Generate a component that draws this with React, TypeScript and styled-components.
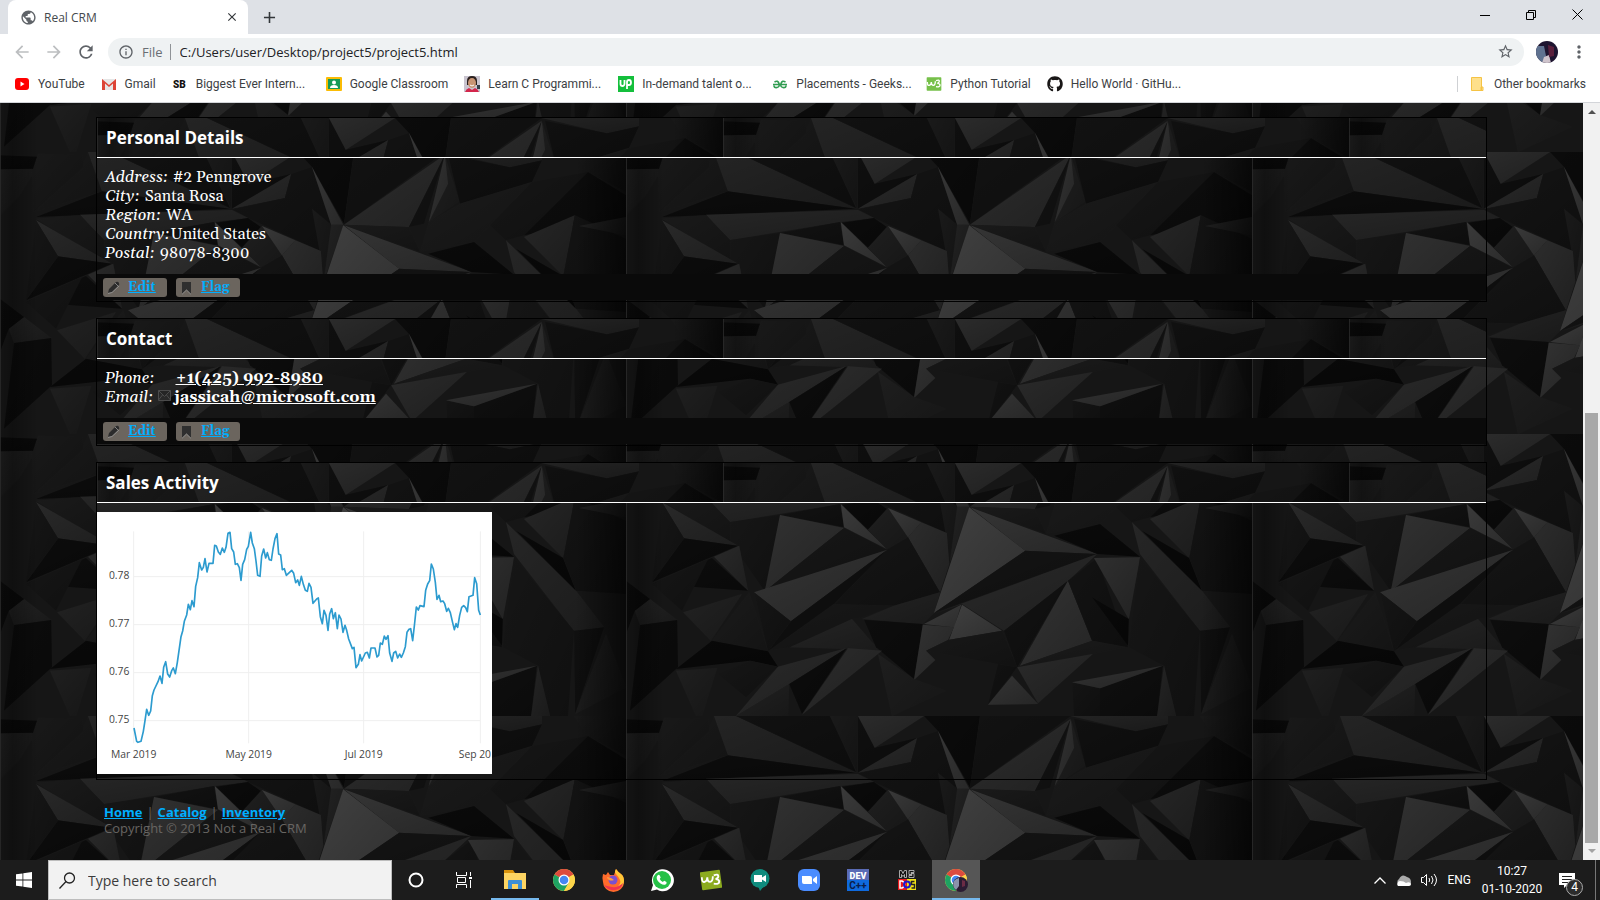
import React from "react";
import styled, { createGlobalStyle } from "styled-components";
import { FaGithub } from "react-icons/fa";
import {
  MdPublic,
  MdClose,
  MdAdd,
  MdArrowBack,
  MdArrowForward,
  MdRefresh,
  MdInfoOutline,
  MdStarBorder,
  MdMoreVert,
} from "react-icons/md";

/* ---------- low-poly rock texture, repeated every 626 x 282 px ---------- */

const facets: [string, string][] = [
  ["0,52 90,50 50,130 0,190", "1d1d1d"],
  ["0,10 95,14 90,50 0,52", "0a0a0a"],
  ["95,5 205,10 210,45 85,180 80,60", "191919"],
  ["220,0 255,118 85,180 205,50", "1a1a1a"],
  ["220,0 275,0 575,170 255,118", "242424"],
  ["255,118 575,170 90,195", "0c0c0c"],
  ["275,0 510,0 575,168", "111111"],
  ["510,0 578,0 578,170", "1a1a1a"],
  ["580,0 622,95 730,65 580,170", "0f0f0f"],
  ["580,0 745,0 622,95", "2b2b2b"],
  ["580,170 728,66 712,138", "2a2a2a"],
  ["712,138 728,66 780,45 828,218 800,297 620,198 580,172", "141414"],
  ["745,0 885,0 860,215 780,45", "0b0b0b"],
  ["885,0 1112,0 860,218", "121212"],
  ["780,45 858,218 828,218", "373737"],
  ["780,170 828,218 808,390 798,290", "1a1a1a"],
  ["828,218 858,218 810,385", "222222"],
  ["860,218 1112,8 1070,130 1022,225", "2d2d2d"],
  ["1112,8 1060,215 1022,225", "131313"],
  ["1112,10 1148,148 1072,210", "1f1f1f"],
  ["1112,10 1120,95 1072,210", "333333"],
  ["1112,0 1355,0 1355,25 1275,46", "232323"],
  ["1120,8 1275,46 1355,25 1330,90 1150,155", "101010"],
  ["1150,155 1330,90 1225,220 1185,270 1050,300 1072,210", "1b1b1b"],
  ["1435,0 1565,0 1565,120 1470,60", "181818"],
  ["1470,60 1565,130 1565,200 1310,250 1330,170", "0d0d0d"],
  ["1330,90 1470,60 1310,250 1265,265 1225,220", "161616"],
  ["200,188 580,174 620,198 535,210 260,264", "262626"],
  ["620,198 652,225 605,287 540,212", "0b0b0b"],
  ["90,200 200,190 260,264 262,325", "1a1a1a"],
  ["260,264 385,243 347,472 262,325", "161616"],
  ["90,205 280,335 145,313", "292929"],
  ["145,313 280,335 65,445", "0c0c0c"],
  ["90,205 145,313 65,445", "161616"],
  ["385,243 535,210 545,280", "121212"],
  ["385,243 545,282 347,472", "313131"],
  ["545,282 652,347 347,472", "171717"],
  ["537,210 652,345 545,280", "3a3a3a"],
  ["655,222 705,310 652,345 605,287", "1f1f1f"],
  ["655,222 738,265 705,310", "393939"],
  ["738,265 802,297 808,390 785,475 705,310", "2c2c2c"],
  ["652,347 705,310 785,475 670,515 520,512", "151515"],
  ["220,368 283,335 305,470", "292929"],
  ["215,372 305,470 65,450", "0d0d0d"],
  ["65,450 205,375 140,530", "161616"],
  ["320,475 652,348 412,562", "343434"],
  ["652,348 520,510 355,652 412,562", "101010"],
  ["143,535 290,480 212,620", "222222"],
  ["308,475 355,652 215,620", "1b1b1b"],
  ["320,475 412,562 355,652", "151515"],
  ["22,530 60,495 128,558 35,573", "222222"],
  ["0,440 60,495 22,530 0,600", "0b0b0b"],
  ["35,573 128,558 130,700 10,830", "0c0c0c"],
  ["125,705 215,620 355,652 380,698 310,680", "090909"],
  ["520,510 670,515 590,550 565,555 410,640 360,648", "181818"],
  ["565,555 615,625 640,650 555,645 410,640", "242424"],
  ["590,555 670,515 785,475 770,537 742,570", "232323"],
  ["595,557 742,570 720,735 625,640", "0d0d0d"],
  ["860,218 1022,225 1050,300", "1a1a1a"],
  ["858,220 998,350 770,537", "414141"],
  ["860,220 1178,360 998,350", "353535"],
  ["998,350 1178,360 770,537", "141414"],
  ["1178,360 1105,440 945,590 840,510 775,537", "2a2a2a"],
  ["745,570 838,512 820,580", "3c3c3c"],
  ["840,512 940,590 808,617", "404040"],
  ["742,572 820,580 805,618 750,650 773,678 720,738", "323232"],
  ["805,618 940,590 978,700 930,690 750,650", "181818"],
  ["1105,440 945,590 978,700", "121212"],
  ["1105,440 1165,620 985,695", "333333"],
  ["1105,440 1178,372 1255,640 1165,620", "131313"],
  ["985,695 1165,620 1250,640 1165,660", "1b1b1b"],
  ["1178,360 1285,368 1185,270 1070,305", "0a0a0a"],
  ["1170,372 1285,370 1257,555", "2f2f2f"],
  ["1165,490 1257,555 1255,635", "090909"],
  ["1265,265 1440,470 1510,580 1435,590 1285,360", "262626"],
  ["1285,370 1435,590 1420,846 1375,846 1345,695 1257,640", "161616"],
  ["1310,255 1437,190 1408,372", "262626"],
  ["1290,290 1408,372 1440,470", "090909"],
  ["1437,190 1565,260 1565,480 1440,470 1408,372", "131313"],
  ["1448,222 1565,195 1565,250", "222222"],
  ["1435,590 1510,580 1438,840", "101010"],
  ["1515,600 1565,760 1438,840", "1f1f1f"],
  ["1115,745 1185,763 1185,846 1120,846", "141414"],
  ["1185,763 1342,695 1328,846 1185,846", "0f0f0f"],
  ["1115,745 1342,695 1185,763", "323232"],
  ["1345,695 1375,846 1328,846", "242424"],
  ["978,700 1167,660 1030,808", "2a2a2a"],
  ["930,690 978,700 905,812", "121212"],
  ["965,725 1030,810 905,812", "343434"],
  ["125,710 228,702 190,846 175,846", "1f1f1f"],
  ["230,720 310,680 380,698 300,790", "161616"],
  ["380,698 552,642 408,750 275,846", "2a2a2a"],
  ["408,750 405,846 275,846", "212121"],
  ["552,642 408,750 440,840", "0c0c0c"],
  ["555,643 640,650 440,842", "2c2c2c"],
  ["630,660 720,735 800,770 665,846", "1e1e1e"],
];

const rockSvg =
  `<svg xmlns="http://www.w3.org/2000/svg" width="626" height="282" viewBox="0 0 1565 846" preserveAspectRatio="none">` +
  `<defs><linearGradient id="s" x1="0" y1="0" x2="1" y2="1"><stop offset="0" stop-opacity="0"/><stop offset="1" stop-opacity=".28"/></linearGradient>` +
  `<linearGradient id="v"><stop offset="0" stop-opacity=".1"/><stop offset=".02" stop-opacity=".3"/><stop offset=".06" stop-opacity="0"/><stop offset=".92" stop-opacity="0"/><stop offset="1" stop-opacity=".6"/></linearGradient></defs>` +
  `<rect width="1565" height="846" fill="#161616"/>` +
  facets
    .map(([p, c]) => `<polygon points="${p}" fill="#${c}"/><polygon points="${p}" fill="url(#s)"/>`)
    .join("") +
  `<rect width="1565" height="846" fill="url(#v)"/><rect width="2" height="846" fill="#2a2a2a"/></svg>`;

const rock = `url("data:image/svg+xml,${encodeURIComponent(rockSvg)}")`;

const uiFont = `"Open Sans", "Noto Sans", sans-serif`;
const compactFont = `Roboto, "Open Sans", sans-serif`;
const serif = `Georgia, Gelasio, "Liberation Serif", serif`;

const Global = createGlobalStyle`
  *, *::before, *::after { box-sizing: border-box; }
  body { margin: 0; font-family: ${uiFont}; background: #111; }
  button, input { font-family: inherit; padding: 0; border: 0; background: none; }
  svg { display: block; flex: none; }
`;

const Screen = styled.div`
  min-height: 100vh;
  display: flex;
  flex-direction: column;
`;

/* ---------- browser frame ---------- */

const TabStrip = styled.div`
  height: 34px;
  background: #dee1e6;
  display: flex;
  padding-left: 8px;
`;
const Tab = styled.div`
  width: 240px;
  background: #fff;
  border-radius: 8px 8px 0 0;
  display: flex;
  align-items: center;
  gap: 7px;
  padding: 0 9px 0 12px;
  font-size: 12px;
  color: #45494d;
`;
const TabTitle = styled.span`
  flex: 1;
`;
const IconButton = styled.button<{ $w?: number; $color?: string }>`
  width: ${(p) => p.$w ?? 16}px;
  display: flex;
  align-items: center;
  justify-content: center;
  color: ${(p) => p.$color ?? "#5f6368"};
`;
const WindowControls = styled.div`
  margin-left: auto;
  height: 29px;
  display: flex;
`;
const Toolbar = styled.div`
  height: 35px;
  background: #fff;
  display: flex;
  align-items: center;
  padding: 0 10px 0 6px;
`;
const Omnibox = styled.label`
  flex: 1;
  height: 28px;
  border-radius: 14px;
  background: #eff2f3;
  display: flex;
  align-items: center;
  margin: 0 12px 0 6px;
  padding: 0 10px;
  font-size: 13px;
  color: #6a6e73;
`;
const Scheme = styled.span`
  padding: 0 7px 0 8px;
  border-right: 1px solid #8f9397;
  line-height: 16px;
`;
const Address = styled.input`
  flex: 1;
  padding-left: 9px;
  font-size: 13px;
  color: #202124;
  outline: 0;
`;
const Avatar = styled.svg`
  border-radius: 50%;
  margin-right: 10px;
`;
const BookmarkBar = styled.nav`
  height: 34px;
  background: #fff;
  border-bottom: 1px solid #d3d5d9;
  display: flex;
  align-items: center;
  gap: 16px;
  padding: 0 14px 3px;
`;
const Bookmark = styled.a<{ $clip?: boolean }>`
  display: flex;
  align-items: center;
  gap: 8px;
  font: 12px/16px ${compactFont};
  color: #3c4043;
  text-decoration: none;
  white-space: nowrap;
  width: ${(p) => (p.$clip ? "138px" : "auto")};
`;
const OtherBookmarks = styled(Bookmark)`
  margin-left: auto;
  border-left: 1px solid #cfd1d4;
  padding-left: 12px;
`;

/* ---------- web page ---------- */

const Viewport = styled.div`
  flex: 1;
  display: flex;
`;
const Page = styled.main`
  flex: 1;
  padding: 14px 96px 24px;
  background: #111 ${rock} 0 49px;
  font-family: ${serif};
  font-size: 16px;
  line-height: 19px;
  color: #fff;
`;
const Scrollbar = styled.div`
  width: 17px;
  background: #f1f1f1;
  display: flex;
  flex-direction: column;
  align-items: center;
  padding: 6px 0;
`;
const ScrollTrack = styled.div`
  flex: 1;
  width: 13px;
  display: flex;
  flex-direction: column;
  padding-bottom: 6px;
`;
const ScrollThumb = styled.div`
  height: 430px;
  margin-top: auto;
  background: #a8a8a8;
`;
const Panel = styled.section`
  border: 1px solid #000;
  margin-bottom: 16px;
`;
const PanelTitle = styled.h2`
  margin: 0;
  height: 40px;
  border-bottom: 1px solid #fff;
  background: #111 ${rock};
  padding: 0 9px;
  font: 700 17px/40px ${uiFont};
`;
const Details = styled.dl`
  margin: 0;
  padding: 10px 8px 11px;
`;
const DetailRow = styled.div<{ $tight?: boolean }>`
  display: flex;
  gap: ${(p) => (p.$tight ? 0 : 4)}px;
`;
const Term = styled.dt`
  font-style: italic;
`;
const Value = styled.dd<{ $indent?: number }>`
  margin: 0 0 0 ${(p) => p.$indent ?? 0}px;
  display: flex;
  align-items: center;
  gap: 3px;
`;
const StrongLink = styled.a`
  color: #fff;
  font-weight: bold;
`;
const Actions = styled.div`
  margin-bottom: 1px;
  height: 26px;
  background: #0a0a0a;
  display: flex;
  gap: 9px;
  padding: 4px 6px 3px;
`;
const Action = styled.a`
  width: 64px;
  border-radius: 3px;
  background: #6b655e;
  display: flex;
  align-items: center;
  gap: 8px;
  padding: 0 0 1px 4px;
  font-size: 13px;
  line-height: 16px;
  font-weight: bold;
  color: #00aeff;
`;
const ChartBox = styled.div`
  padding: 9px 0 5px;
`;
const PageFooter = styled.footer`
  padding: 8px 8px 0;
  font: 13px/16px ${uiFont};
  color: #686562;

  a {
    color: #00aeff;
    font-weight: bold;
  }
`;
const Divider = styled.span`
  margin: 0 4px;
`;
const Copyright = styled.p`
  margin: 0;
`;

/* ---------- desktop task bar ---------- */

const TaskBar = styled.footer`
  height: 40px;
  background: #1c1c1c;
  display: flex;
  color: #fff;
`;
const TaskButton = styled.button<{ $active?: boolean; $open?: boolean }>`
  width: 48px;
  display: flex;
  align-items: center;
  justify-content: center;
  background: ${(p) => (p.$active ? "#565656" : "transparent")};
  border-bottom: ${(p) => (p.$active || p.$open ? "2px solid #76b9ed" : "0")};
  padding-top: ${(p) => (p.$active || p.$open ? "2px" : "0")};
`;
const SearchBox = styled.label`
  width: 344px;
  background: #f2f2f2;
  border: 1px solid #bdbdbd;
  display: flex;
  align-items: center;
  gap: 12px;
  padding: 0 10px;
`;
const SearchInput = styled.input`
  flex: 1;
  font-size: 14px;
  outline: 0;
  &::placeholder { color: #3b3b3b; opacity: 1; }
`;
const AppList = styled.div`
  display: flex;
  gap: 1px;
  margin-left: 3px;
`;
const Tray = styled.div`
  margin-left: auto;
  display: flex;
  align-items: center;
  gap: 9px;
  padding-right: 4px;
  font: 12px/18px ${compactFont};
`;
const Clock = styled.time`
  width: 64px;
  text-align: center;
`;
const NoticeButton = styled.button`
  position: relative;
  width: 37px;
  height: 40px;
  margin-left: 6px;
  border-right: 1px solid #777;
  display: flex;
  align-items: center;
`;
const NoticeCount = styled.span`
  position: absolute;
  left: 7px;
  top: 19px;
  width: 17px;
  height: 17px;
  border-radius: 50%;
  border: 1px solid #aaa;
  background: #2c2c2c;
  color: #fff;
  font-size: 12px;
  line-height: 15px;
`;

/* ---------- small drawings ---------- */

const ChromeLogo = ({ face }: { face?: boolean }) => (
  <svg width="24" height="24" viewBox="0 0 24 24">
    <circle cx="12" cy="12" r="11" fill="#fdd54a" />
    <path d="M12 12 2.500 6.500A11 11 0 0 1 21.500 6.500Z" fill="#dd4b3e" />
    <path d="M12 12 2.500 6.500A11 11 0 0 0 12 23L17 15Z" fill="#1ea362" />
    <path d="M12 12 21.500 6.500A11 11 0 0 1 12 23L16.500 15Z" fill="#fdd54a" />
    <circle cx="12" cy="12" r="5.500" fill="#fff" />
    <circle cx="12" cy="12" r="4.300" fill="#4587f3" />
    {face && (
      <>
        <circle cx="16.500" cy="16.500" r="7.500" fill="#2b1c33" />
        <path d="M10 13a7 7 0 0 1 5-3v8l-3 4a7 7 0 0 1-2-9z" fill="#8b93ab" />
        <path d="M18 12l3 1v5l-3 1z" fill="#6b2c45" />
      </>
    )}
  </svg>
);

const W3Logo = ({ size, color }: { size: number; color: string }) => (
  <svg width={size} height={size} viewBox="0 0 24 24">
    <rect x="1" y="2" width="22" height="20" rx="1" fill={color} transform={size > 16 ? "rotate(-8 12 12)" : undefined} />
    <path d="M2 9q0 6 3 5 3-1 3-5 0 5 3 5t3-6M15 7q5-2 5 1 0 2-3 3 4 0 4 3t-6 2" fill="none" stroke="#fff" strokeWidth="2" />
  </svg>
);

const PencilIcon = () => (
  <svg width="13" height="13" viewBox="0 0 13 13">
    <path d="M1 12l1-4 7-7q2-1 3 1t-1 3L5 11z" fill="#2c2c2c" />
    <path d="M1 12.500 5 11.500 12 5M8 2l3 3" fill="none" stroke="#999" strokeWidth=".8" />
  </svg>
);

const FlagIcon = () => (
  <svg width="13" height="15" viewBox="0 0 13 15">
    <path d="M2 2h9v12l-4.500-4.500L2 14z" fill="#2f2f2f" />
    <path d="M2 14.300 6.500 10l4.500 4.300" fill="none" stroke="#999" strokeWidth=".8" />
  </svg>
);

const MailIcon = () => (
  <svg width="13" height="15" viewBox="0 0 13 15">
    <path d="M.5.500h12v10H.5zM.5.500l6 6 6-6M.5 10l4-5M12.500 10l-4-5" fill="#292929" stroke="#4b4b4b" />
  </svg>
);

const pricePoints =
  "132,684 140,724 144,727 153,724 160,694 165,662 170,628 176,646 182,633 187,587 192,570 204,545 210,528 216,550 221,502 227,485 233,522 239,531 245,512 250,504 256,521 262,487 267,452 273,410 278,393 283,364 290,345 295,313 301,329 306,302 312,320 317,259 323,233 328,188 335,210 340,202 345,176 351,216 357,190 369,190 374,136 379,138 385,156 391,163 397,144 403,157 408,142 414,100 420,97 425,146 431,156 436,193 442,191 448,203 453,241 458,193 464,179 470,148 475,139 482,97 487,129 493,146 498,183 503,226 510,229 515,168 521,147 527,174 532,158 538,179 544,181 549,147 555,116 561,101 566,162 572,165 577,209 583,206 589,226 605,211 611,220 617,248 623,240 628,256 634,229 640,253 646,271 652,274 657,250 663,262 669,310 680,297 685,294 691,350 697,371 702,331 708,346 714,391 719,342 725,326 730,356 736,338 742,386 747,345 753,357 759,397 765,376 770,391 776,417 787,446 792,442 798,503 805,493 810,464 815,483 826,459 832,457 838,474 843,444 855,444 861,471 866,466 871,429 877,433 883,408 888,418 894,407 899,459 906,484 911,459 917,454 923,474 929,462 934,472 940,459 946,440 951,397 957,388 962,386 968,422 973,378 979,321 985,330 990,317 1002,320 1007,271 1013,252 1019,242 1024,192 1030,207 1036,247 1041,298 1047,286 1052,305 1059,303 1064,311 1070,334 1075,325 1081,338 1087,364 1093,389 1098,371 1103,382 1109,346 1115,322 1121,317 1127,323 1132,335 1137,290 1149,286 1154,233 1160,251 1166,331 1171,345";

const axis = { fontFamily: "Open Sans", fontSize: 31, fill: "#444" };

const SalesChart = () => (
  <svg width="395" height="262" viewBox="21 36 1185 786" role="img" aria-label="Sales activity">
    <rect x="21" y="36" width="1185" height="786" fill="#fff" />
    <path d="M132 230H1171M132 374H1171M132 518H1171M132 662H1171M131 94V730M476 94V730M821 94V730M1171 94V730" stroke="#efefef" strokeWidth="3" />
    <polyline points={pricePoints} fill="none" stroke="#2c9bcf" strokeWidth="5" strokeLinejoin="round" />
    {["0.78", "0.77", "0.76", "0.75"].map((label, i) => (
      <text key={label} x="118" y={237 + i * 144} textAnchor="end" {...axis}>
        {label}
      </text>
    ))}
    {["Mar 2019", "May 2019", "Jul 2019"].map((label, i) => (
      <text key={label} x={131 + i * 345} y="774" textAnchor="middle" {...axis}>
        {label}
      </text>
    ))}
    <text x="1203" y="774" textAnchor="end" {...axis}>
      Sep 20
    </text>
  </svg>
);

/* ---------- data ---------- */

const S = (props: React.SVGProps<SVGSVGElement>) => <svg width="16" height="16" viewBox="0 0 16 16" {...props} />;

const bookmarks: { label: string; clip?: boolean; icon: React.ReactNode }[] = [
  {
    label: "YouTube",
    icon: <S><rect x="1" y="2" width="14" height="12" rx="3" fill="#f00" /><path d="M6.500 5.500v5L10.500 8z" fill="#fff" /></S>,
  },
  {
    label: "Gmail",
    icon: <S><path d="M1 3h14v11H1z" fill="#e6e6e6" /><path d="M1 14V3l7 6 7-6v11h-3V7.500L8 11 4 7.500V14z" fill="#dd4436" /></S>,
  },
  {
    label: "Biggest Ever Intern...",
    clip: true,
    icon: <S><text x="1" y="12" fontFamily="Roboto" fontWeight="900" fontSize="10" fill="#111">SB</text></S>,
  },
  {
    label: "Google Classroom",
    icon: <S><rect y="1" width="16" height="14" rx="1" fill="#fbbc05" /><rect x="2" y="3" width="12" height="10" fill="#159a56" /><circle cx="8" cy="6.500" r="2" fill="#fff" /><path d="M4 12q0-3 4-3t4 3z" fill="#fff" /></S>,
  },
  {
    label: "Learn C Programmi...",
    clip: true,
    icon: <S><path d="M0 0h16v16H0z" fill="#c9c4cf" /><path d="M3 5q0-5 5-5t5 5v4H3z" fill="#2b211f" /><path d="M13 9h3v4h-3z" fill="#36404a" /><ellipse cx="8" cy="7" rx="4" ry="5" fill="#c99574" /><path d="M6 9q2 2 4 0" stroke="#fff" fill="none" /><path d="M1 16q1-3 4-4l3 2 3-2q3 1 4 4z" fill="#d3264b" /></S>,
  },
  {
    label: "In-demand talent o...",
    clip: true,
    icon: <S><path d="M0 0h16v16H0z" fill="#14bf3c" /><path d="M2.500 4v4a2 2 0 0 0 4 0V4M9 13V6q0-2 2-2t2 2.500-2 2.500-2-1" fill="none" stroke="#fff" strokeWidth="1.800" /></S>,
  },
  {
    label: "Placements - Geeks...",
    clip: true,
    icon: <S><path d="M1 8.500h14M2.500 6Q6 4 7 7.500t-2 4-3-2M13.500 6Q10 4 9 7.500t2 4 3-2" fill="none" stroke="#2f9c50" strokeWidth="1.600" /></S>,
  },
  { label: "Python Tutorial", icon: <W3Logo size={16} color="#76c04a" /> },
  { label: "Hello World · GitHu...", clip: true, icon: <FaGithub size={16} color="#191717" /> },
];

const address: [string, string][] = [
  ["Address:", "#2 Penngrove"],
  ["City:", "Santa Rosa"],
  ["Region:", "WA"],
  ["Country:", "United States"],
  ["Postal:", "98078-8300"],
];

const apps: { name: string; open?: boolean; active?: boolean; icon: React.ReactNode }[] = [
  {
    name: "File Explorer",
    open: true,
    icon: (
      <svg width="24" height="22" viewBox="0 0 24 22">
        <path d="M1 1h9l2 3v5H1z" fill="#d9930c" />
        <path d="M1 4h22v16H1z" fill="#fcd462" />
        <path d="M5 20v-8q0-1 1-1h12q1 0 1 1v8h-4v-5H9v5z" fill="#3c8fd6" />
      </svg>
    ),
  },
  { name: "Chrome", icon: <ChromeLogo /> },
  {
    name: "Firefox",
    icon: (
      <svg width="24" height="24" viewBox="0 0 24 24">
        <path d="M2 6l3 1 2-3 2 3h4l2-6q2 3 5 5t3 8a10.500 10 0 0 1-21 0q-1-5 0-8z" fill="#ff6b2b" />
        <path d="M15 1q-2 3 0 5t4 6-5 9q9-1 9-8 0-5-3-7t-5-5z" fill="#ffc737" />
        <path d="M3 17q4 6 11 5 7-1 8-7-5 5-11 4T3 17z" fill="#f0334f" />
        <circle cx="12" cy="12" r="4.500" fill="#7a4fd0" />
        <path d="M7 9q4 1 6 3-3 1-5 0t-2-3z" fill="#ff9a3c" />
      </svg>
    ),
  },
  {
    name: "WhatsApp",
    icon: (
      <svg width="24" height="24" viewBox="0 0 24 24">
        <path d="M1 23l2-6A11 11 0 1 1 7 21.500z" fill="#fff" />
        <circle cx="12" cy="12" r="9" fill="#25c147" />
        <path d="M7.500 7.500q1.500-1.500 2.500.5l.7 1.600-1 1.300q1 2 3.200 3.200l1.300-1.300 2.300 1.200q.5 1.500-1 2.500-2 1-5-1-4-3-3.800-6 0-1.200.8-2z" fill="#fff" />
      </svg>
    ),
  },
  { name: "W3Schools", icon: <W3Logo size={22} color="#8cab1f" /> },
  {
    name: "Meet",
    icon: (
      <svg width="22" height="24" viewBox="0 0 22 24">
        <circle cx="11" cy="10.500" r="9.500" fill="#0f8b7d" />
        <path d="M9 18h6l-4 5z" fill="#0f8b7d" />
        <path d="M5 7h8v2.500L17 7v7l-4-2.500V14H5z" fill="#fff" />
      </svg>
    ),
  },
  {
    name: "Zoom",
    icon: (
      <svg width="24" height="24" viewBox="0 0 24 24">
        <rect x="1" y="1" width="22" height="22" rx="6" fill="#4a8cff" />
        <path d="M5 8h8q2 0 2 2v6H7q-2 0-2-2zM16 11l4-3v8l-4-3z" fill="#fff" />
      </svg>
    ),
  },
  {
    name: "Dev-C++",
    icon: (
      <svg width="22" height="22" viewBox="0 0 22 22">
        <path d="M0 0h22v11H0z" fill="#5a6bb5" />
        <path d="M0 11h22v11H0z" fill="#0f6ade" />
        <text x="11" y="10" textAnchor="middle" fontFamily="Roboto" fontWeight="900" fontSize="9" fill="#fff">DEV</text>
        <text x="11" y="20" textAnchor="middle" fontFamily="Roboto" fontWeight="700" fontSize="10" fill="#0b1d4a">C++</text>
      </svg>
    ),
  },
  {
    name: "MS-DOS",
    icon: (
      <svg width="18" height="22" viewBox="0 0 18 22">
        <path d="M1.500 8.500v-7h2l1.500 3 1.500-3h2v7h-2v-3l-1.500 2-1.500-2v3zM16 1.500h-5v4h3v1h-3v2h5v-4h-3v-1h3z" fill="#111" stroke="#ccc" strokeWidth=".8" />
        <path d="M0 10h9v11H0z" fill="#e8181c" />
        <path d="M9 10h9v11H9z" fill="#f4e418" />
        <path d="M2 12h2q2.500 1 2.500 3.500T4 19H2z" fill="none" stroke="#fff" strokeWidth="1.500" />
        <circle cx="9" cy="15.500" r="3" fill="none" stroke="#1a1ad0" strokeWidth="2" />
        <path d="M16.500 12.500h-3v3h3v3.500h-3" fill="none" stroke="#222" strokeWidth="1.500" />
      </svg>
    ),
  },
  { name: "Real CRM - Chrome", active: true, icon: <ChromeLogo face /> },
];

const PanelActions = () => (
  <Actions>
    <Action href="#edit"><PencilIcon />Edit</Action>
    <Action href="#flag"><FlagIcon />Flag</Action>
  </Actions>
);

export default function App() {
  return (
    <Screen>
      <Global />
      <header>
        <TabStrip>
          <Tab>
            <MdPublic size={17} color="#5f6368" />
            <TabTitle>Real CRM</TabTitle>
            <IconButton aria-label="Close tab" $w={14} $color="#33373a"><MdClose size={14} /></IconButton>
          </Tab>
          <IconButton aria-label="New tab" $w={43} $color="#33373a"><MdAdd size={19} /></IconButton>
          <WindowControls>
            <IconButton aria-label="Minimize" $w={46} $color="#000"><svg width="10" height="10"><path d="M0 5.500h10" stroke="#000" /></svg></IconButton>
            <IconButton aria-label="Restore" $w={46} $color="#000"><svg width="10" height="10"><path d="M.5 2.500h7v7h-7zM2.500 2.500v-2h7v7h-2" fill="none" stroke="#000" /></svg></IconButton>
            <IconButton aria-label="Close" $w={46} $color="#000"><svg width="11" height="11"><path d="M.5.500l10 10M10.500.500l-10 10" stroke="#000" /></svg></IconButton>
          </WindowControls>
        </TabStrip>
        <Toolbar>
          <IconButton aria-label="Back" $w={32} $color="#bcbec0"><MdArrowBack size={20} /></IconButton>
          <IconButton aria-label="Forward" $w={32} $color="#bcbec0"><MdArrowForward size={20} /></IconButton>
          <IconButton aria-label="Reload" $w={32}><MdRefresh size={20} /></IconButton>
          <Omnibox>
            <MdInfoOutline size={16} color="#5f6368" />
            <Scheme>File</Scheme>
            <Address aria-label="Address" defaultValue="C:/Users/user/Desktop/project5/project5.html" />
            <MdStarBorder size={17} color="#5f6368" />
          </Omnibox>
          <Avatar width="22" height="22" viewBox="0 0 22 22">
            <path d="M0 0h22v22H0z" fill="#1d1430" />
            <path d="M0 5h8l2 10-4 7H0z" fill="#5f7290" />
            <path d="M8 16l5-2 2 8H6z" fill="#cfc4cc" />
            <path d="M12 4l6 2v9l-5 1z" fill="#5a1f3c" />
          </Avatar>
          <IconButton aria-label="Menu" $w={22}><MdMoreVert size={20} /></IconButton>
        </Toolbar>
        <BookmarkBar aria-label="Bookmarks">
          {bookmarks.map((b) => (
            <Bookmark key={b.label} href="#bookmark" $clip={b.clip}>
              {b.icon}
              {b.label}
            </Bookmark>
          ))}
          <OtherBookmarks href="#other">
            <S><path d="M1.500 1.500h10v13h-10zM11 11h2v3.500h-2z" fill="#fee08b" stroke="#f5c344" /></S>
            Other bookmarks
          </OtherBookmarks>
        </BookmarkBar>
      </header>

      <Viewport>
        <Page>
          <Panel>
            <PanelTitle>Personal Details</PanelTitle>
            <Details>
              {address.map(([term, value]) => (
                <DetailRow key={term} $tight={term === "Country:"}>
                  <Term>{term}</Term>
                  <Value>{value}</Value>
                </DetailRow>
              ))}
            </Details>
            <PanelActions />
          </Panel>
          <Panel>
            <PanelTitle>Contact</PanelTitle>
            <Details>
              <DetailRow>
                <Term>Phone:</Term>
                <Value $indent={16}><StrongLink href="tel:+14259928980">+1(425) 992-8980</StrongLink></Value>
              </DetailRow>
              <DetailRow>
                <Term>Email:</Term>
                <Value><MailIcon /><StrongLink href="mailto:jassicah@microsoft.com">jassicah@microsoft.com</StrongLink></Value>
              </DetailRow>
            </Details>
            <PanelActions />
          </Panel>
          <Panel>
            <PanelTitle>Sales Activity</PanelTitle>
            <ChartBox><SalesChart /></ChartBox>
          </Panel>
          <PageFooter>
            <a href="#home">Home</a><Divider>|</Divider><a href="#catalog">Catalog</a><Divider>|</Divider><a href="#inventory">Inventory</a>
            <Copyright>Copyright © 2013 Not a Real CRM</Copyright>
          </PageFooter>
        </Page>
        <Scrollbar aria-hidden="true">
          <svg width="8" height="5"><path d="M0 5l4-4 4 4z" fill="#505050" /></svg>
          <ScrollTrack><ScrollThumb /></ScrollTrack>
          <svg width="8" height="5"><path d="M0 0l4 4 4-4z" fill="#a3a3a3" /></svg>
        </Scrollbar>
      </Viewport>

      <TaskBar>
        <TaskButton aria-label="Start">
          <svg width="16" height="16"><path d="M0 2.300 6.500 1.400V7.600H0zM7.300 1.300 16 0V7.600H7.300zM0 8.400H6.500V14.600L0 13.700zM7.300 8.400H16V16L7.300 14.700z" fill="#fff" /></svg>
        </TaskButton>
        <SearchBox>
          <svg width="17" height="17" viewBox="0 0 17 17"><circle cx="10.500" cy="6" r="5" fill="none" stroke="#222" strokeWidth="1.300" /><path d="M7 9.500.5 16.500" stroke="#222" strokeWidth="1.300" /></svg>
          <SearchInput aria-label="Search" placeholder="Type here to search" />
        </SearchBox>
        <TaskButton aria-label="Cortana">
          <svg width="16" height="16"><circle cx="8" cy="8" r="6.500" fill="none" stroke="#fff" strokeWidth="2" /></svg>
        </TaskButton>
        <TaskButton aria-label="Task view">
          <svg width="17" height="16"><path d="M.5 0v3.500h10V0M.5 16v-3.500h10V16M1.500 5.500h8v5h-8zM14.500 0v4M14.500 8v8" fill="none" stroke="#fff" /><path d="M13 5h3v2h-3z" fill="#fff" /></svg>
        </TaskButton>
        <AppList>
          {apps.map((a) => (
            <TaskButton key={a.name} aria-label={a.name} $open={a.open} $active={a.active}>{a.icon}</TaskButton>
          ))}
        </AppList>
        <Tray>
          <svg width="12" height="7"><path d="M.5 6.500 6 1l5.500 5.500" fill="none" stroke="#fff" strokeWidth="1.300" /></svg>
          <svg width="17" height="11"><path d="M4 10a3.500 3.500 0 0 1 0-6q3-6 8-2 4 1 4 5t-3 3z" fill="#aaa" /><path d="M3 11a3 3 0 0 1 2-5q4 0 6 2 4-2 5 1 0 2-2 2z" fill="#fff" /></svg>
          <svg width="17" height="14"><path d="M.5 4.500h2l3-3v11l-3-3h-2zM8 5q1.500 2 0 4M10.500 3q3 4 0 8M13 1q5 6 0 12" fill="none" stroke="#fff" /></svg>
          <span>ENG</span>
          <Clock>10:27<br />01-10-2020</Clock>
          <NoticeButton aria-label="4 notifications">
            <svg width="16" height="17"><path d="M0 1h16v12H8l-3 3v-3H0z" fill="#fff" /><path d="M3 4.500h10M3 7.500h10M3 10.500h6" stroke="#222" /></svg>
            <NoticeCount>4</NoticeCount>
          </NoticeButton>
        </Tray>
      </TaskBar>
    </Screen>
  );
}
